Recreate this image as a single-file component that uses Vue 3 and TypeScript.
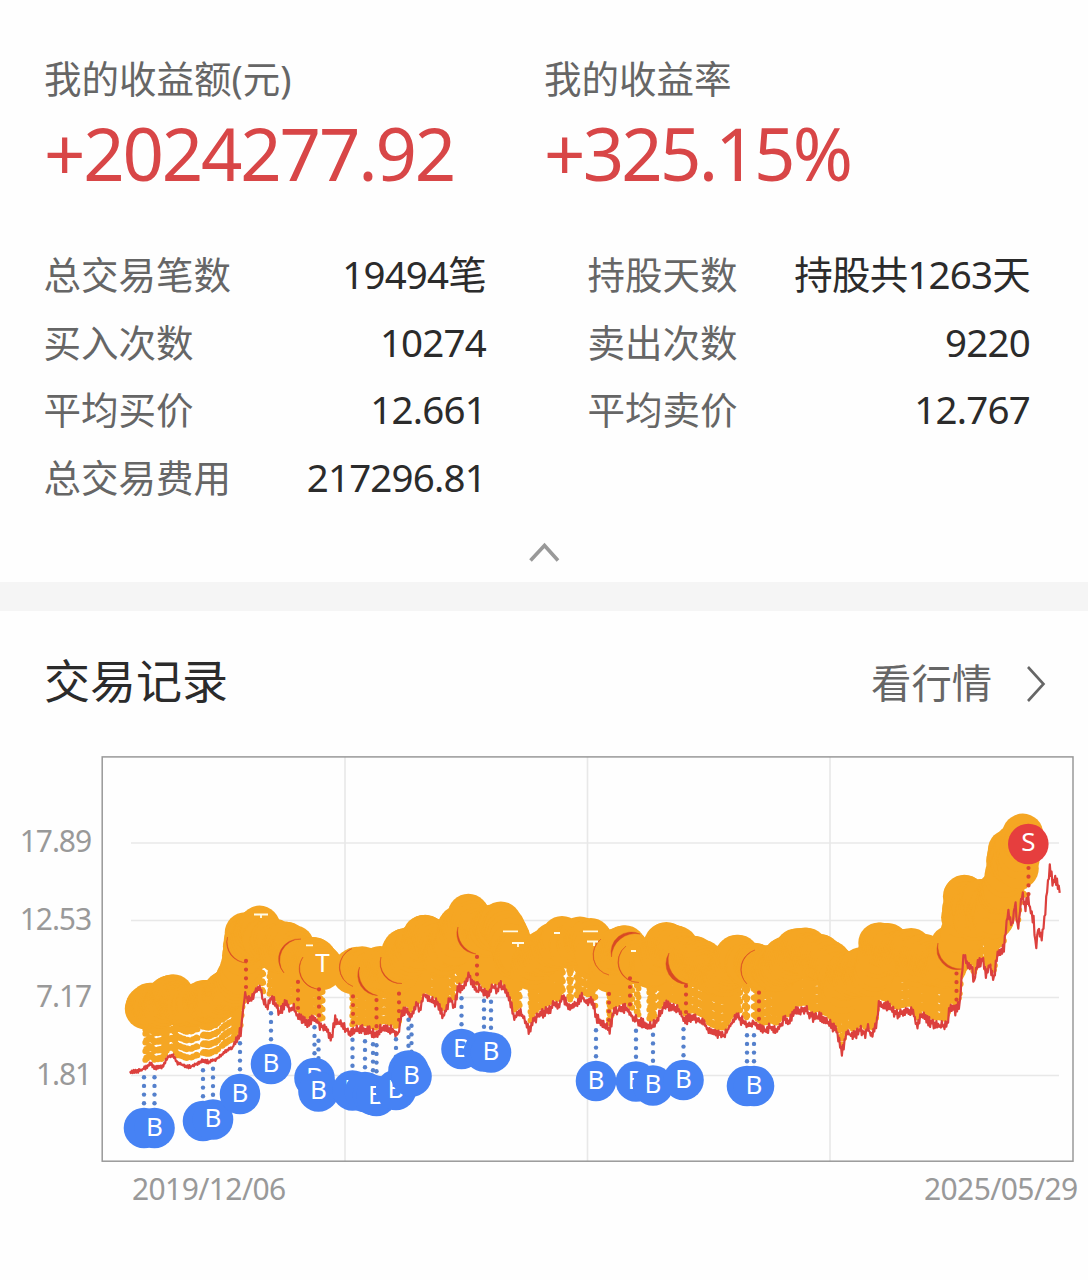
<script setup lang="ts">
interface Stat {
  label: string
  value: string
}

interface Point {
  x: number
  y: number
  base: number
}

const leftStats: Stat[] = [
  { label: '总交易笔数', value: '19494笔' },
  { label: '买入次数', value: '10274' },
  { label: '平均买价', value: '12.661' },
  { label: '总交易费用', value: '217296.81' },
]

const rightStats: Stat[] = [
  { label: '持股天数', value: '持股共1263天' },
  { label: '卖出次数', value: '9220' },
  { label: '平均卖价', value: '12.767' },
]

const yTicks = [
  { text: '17.89', y: 86 },
  { text: '12.53', y: 163.5 },
  { text: '7.17', y: 240.5 },
  { text: '1.81', y: 318.5 },
]
const xGrid = [345, 587.5, 830]

/* Key price points: x, y in chart space */
const keys: number[][] = [
  [130, 1072], [138, 1071], [145, 1068], [151, 1063], [154, 1068], [162, 1067], [168, 1057], [173, 1055],
  [177, 1063], [190, 1067], [202, 1061], [210, 1062], [218, 1058], [225, 1052], [233, 1047], [237, 1038],
  [241, 1031], [243, 1010], [245, 993], [248, 1002], [253, 995], [260, 986], [262, 998], [267, 1008],
  [271, 998], [275, 1003], [280, 1013], [286, 1003], [290, 1011], [293, 1007], [298, 1017], [306, 1023],
  [310, 1022], [315, 1018], [320, 1026], [327, 1030], [331, 1040], [335, 1020], [342, 1025], [350, 1033],
  [358, 1029], [370, 1031], [376, 1036], [380, 1029], [392, 1030], [398, 1034], [402, 1013], [407, 1008],
  [410, 1018], [417, 1005], [420, 1009], [424, 995], [430, 1001], [437, 1003], [443, 1017], [450, 999],
  [454, 1006], [458, 989], [465, 986], [469, 975], [473, 985], [477, 992], [480, 988], [488, 997],
  [492, 985], [497, 990], [500, 982], [505, 991], [510, 1000], [514, 1017], [520, 1012], [525, 1020],
  [529, 1030], [535, 1018], [547, 1011], [555, 1004], [558, 1007], [562, 997], [570, 1007], [577, 1003],
  [582, 996], [585, 1002], [592, 1000], [597, 1018], [603, 1023], [610, 1030], [613, 1013], [622, 1009],
  [627, 1008], [632, 1017], [640, 1022], [652, 1027], [658, 1018], [664, 1005], [677, 1008], [685, 1022],
  [690, 1017], [703, 1023], [712, 1033], [725, 1036], [730, 1025], [737, 1017], [747, 1025], [753, 1023],
  [763, 1031], [772, 1027], [777, 1031], [785, 1018], [788, 1022], [795, 1012], [805, 1009], [812, 1017],
  [820, 1017], [830, 1023], [837, 1032], [842, 1051], [847, 1033], [853, 1036], [860, 1030], [865, 1034],
  [868, 1028], [872, 1037], [876, 1026], [879, 1004], [890, 1007], [895, 1014], [903, 1012], [912, 1010],
  [917, 1025], [922, 1015], [928, 1021], [935, 1025], [947, 1026], [950, 1006], [955, 1011], [960, 1003],
  [962, 973], [964, 952], [968, 967], [972, 968], [974, 982], [978, 963], [983, 960], [986, 976],
  [990, 965], [994, 981], [997, 954], [1004, 947], [1006, 927], [1008, 908], [1012, 927], [1015, 901],
  [1018, 931], [1022, 893], [1025, 907], [1028, 898], [1031, 913], [1034, 922], [1036, 951], [1038, 928],
  [1042, 937], [1045, 913], [1047, 893], [1050, 868], [1053, 885], [1055, 877], [1060, 889],
]

function priceAt(x: number): number {
  for (let i = 1; i < keys.length; i++) {
    if (x <= keys[i][0]) {
      const [ax, ay] = keys[i - 1]
      const [bx, by] = keys[i]
      return ay + ((by - ay) * (x - ax)) / (bx - ax)
    }
  }
  return keys[keys.length - 1][1]
}

/* Repeatable day-to-day movement on top of the key points */
let seed = 20191206
function random(): number {
  seed = (Math.imul(seed, 1664525) + 1013904223) >>> 0
  return seed / 4294967296
}

const days: Point[] = []
for (let i = 0; i <= 1033; i++) {
  const x = 130 + i * 0.9
  const amp = x < 235 ? 1.8 : x > 1003 ? 6 : 5
  const base = priceAt(x)
  days.push({ x, base, y: base + random() * amp * (i % 2 ? 1 : -1) })
}
const pricePath = 'M' + days.map((p) => `${p.x.toFixed(1)},${p.y.toFixed(1)}`).join('L')

/* Spans with no same-day round trips */
const quiet: number[][] = [
  [155.5, 157.5], [188, 191], [193, 195.5], [197.5, 202.5], [219, 221], [264, 269], [272, 274], [323, 352],
  [520, 530.5], [563, 569], [571, 576], [580, 583], [596, 608], [633, 636], [639, 649], [655, 659], [741, 744], [748, 753],
]
const trades = days.filter((p) => p.x >= 145 && p.x <= 1025 && !quiet.some(([a, b]) => p.x > a && p.x < b))

const STEP = 8.7
const tradeDots = trades
  .map((p) => [1, 2, 3, 4, 4.5].map((k) => `M${p.x.toFixed(1)},${(p.base + (p.y - p.base) * 0.5 - k * STEP).toFixed(1)}h0`).join(''))
  .join('')

const sells = [246, 298, 319, 353, 376.5, 399, 477, 609, 630, 686, 759, 956.5].map((x) => ({ x, y: priceAt(x) }))

/* Sell badges peeking out from under the round-trip badges */
function crescent(ax: number, ay: number, bx: number, by: number, inner: number, sweep = 0): string {
  return `M${ax} ${ay}A20.3 20.3 0 0 ${sweep} ${bx} ${by}A${inner} ${inner} 0 0 ${1 - sweep} ${ax} ${ay}Z`
}
const crescents = [
  crescent(227.5, 937, 247, 963, 21.6),
  crescent(301, 939, 284, 973, 21.2),
  crescent(303, 957, 317, 989, 21),
  crescent(352, 948.5, 353, 986.5, 20.6),
  crescent(359.5, 967, 377.5, 995.5, 23.5),
  crescent(381, 957, 402, 983.5, 21.5),
  crescent(458, 927, 476, 954, 24),
  crescent(601, 939, 609, 975, 20.6),
  crescent(611.5, 957, 640, 934, 24, 1),
  crescent(626, 946, 639, 982.5, 20.6),
  crescent(669, 953, 688, 984, 25),
  crescent(755, 950, 747, 984, 20.8),
  crescent(938, 943, 962, 969, 23.2),
]

/* x, y and whether the letter is visible on the badge */
const buys: number[][] = [
  [144, 1128, 0], [154.5, 1128, 1], [203, 1121, 0], [213, 1119.5, 1], [240, 1094, 1], [271, 1064, 1],
  [314.5, 1078, 1], [318.5, 1091.5, 1], [352.5, 1090.5, 1], [365, 1092, 0], [373, 1095, 0], [376.5, 1096, 1],
  [396, 1090, 1], [408.5, 1070.5, 0], [411.5, 1076.5, 1], [461.5, 1049, 1], [484, 1051.5, 0],
  [491, 1052.5, 1], [596, 1081, 1], [636, 1081.5, 1], [653, 1085.5, 1], [683.5, 1080, 1], [747, 1086, 0],
  [754, 1086, 1],
]
const buyDots = [1, 2, 3, 4]
</script>

<template>
  <main class="page">
    <section class="summary">
      <div class="totals">
        <div class="total">
          <div class="total-label">我的收益额(元)</div>
          <div class="total-value">+2024277.92</div>
        </div>
        <div class="total">
          <div class="total-label">我的收益率</div>
          <div class="total-value rate">+325.15%</div>
        </div>
      </div>
      <div class="stats">
        <dl class="stat-col">
          <div v-for="s in leftStats" :key="s.label" class="stat">
            <dt>{{ s.label }}</dt>
            <dd>{{ s.value }}</dd>
          </div>
        </dl>
        <dl class="stat-col">
          <div v-for="s in rightStats" :key="s.label" class="stat">
            <dt>{{ s.label }}</dt>
            <dd>{{ s.value }}</dd>
          </div>
        </dl>
      </div>
      <div class="collapse">
        <svg width="32" height="22" viewBox="0 0 32 22">
          <path d="M2.500 19.500L16.500 4.500L30 19.500" fill="none" stroke="#999" stroke-width="3.600" />
        </svg>
      </div>
    </section>

    <section class="records">
      <header class="records-head">
        <h2>交易记录</h2>
        <a class="more">
          <span>看行情</span>
          <svg width="20" height="38" viewBox="0 0 20 38">
            <path d="M2 2L17.500 19L2 36" fill="none" stroke="#666" stroke-width="2.600" />
          </svg>
        </a>
      </header>

      <svg class="chart" width="1088" height="470" viewBox="0 756 1088 470">
        <g stroke="#e8e8e8" stroke-width="1.600">
          <path v-for="x in xGrid" :key="x" :d="`M${x} 757V1161`" />
          <path v-for="t in yTicks" :key="t.text" :d="`M131 ${t.y + 757}H1059`" />
        </g>
        <rect x="102.200" y="756.900" width="970.800" height="404.300" fill="none" stroke="#999" stroke-width="1.500" />
        <text v-for="t in yTicks" :key="t.text" class="axis" x="91" :y="t.y + 766" text-anchor="end">{{ t.text }}</text>
        <text class="axis date" x="132" y="1200">2019/12/06</text>
        <text class="axis date" x="924" y="1200">2025/05/29</text>

        <path :d="tradeDots" stroke="#f5a623" stroke-width="5.900" stroke-linecap="round" />
        <g fill="#f5a623">
          <circle v-for="p in trades" :key="p.x" :cx="p.x" :cy="p.base + (p.y - p.base) * 0.6 - 60" r="20.500" />
          <circle cx="322" cy="969" r="21" />
        </g>
        <path v-for="s in sells" :key="s.x" :d="`M${s.x} ${s.y - 9}V${s.y - 36}`" class="sell-stem" />
        <path v-for="c in crescents" :key="c" :d="c" fill="#d84a24" stroke="#d84a24" stroke-width="0.400" />
        <path
          class="sliver"
          d="M254 914.500H268M261 914V918M306 945.300H313M503 931.300H518M512 943H524M518 943V947M554 933H560M583 931.300H598M587 941.500H598M594 941V946M631 951H636"
        />
        <text class="mark" x="322.500" y="971.500">T</text>

        <path :d="pricePath" fill="none" stroke="#dc403d" stroke-width="2.200" stroke-linejoin="round" />

        <g v-for="b in buys" :key="b[0]">
          <circle v-for="k in buyDots" :key="k" :cx="b[0]" :cy="b[1] - 59.500 + k * STEP" r="2.200" fill="#5480cc" />
        </g>
        <g v-for="b in buys" :key="'b' + b[0]">
          <circle :cx="b[0]" :cy="b[1]" r="20.300" fill="#4682f4" />
          <text v-if="b[2]" class="mark" :x="b[0]" :y="b[1] + 7.500">B</text>
        </g>

        <path d="M1028.500 868V897" class="sell-stem" />
        <circle cx="1028.300" cy="844" r="20.300" fill="#e63e3e" />
        <text class="mark" x="1028.300" y="850.500">S</text>
      </svg>
    </section>
  </main>
</template>

<style>
body {
  margin: 0;
  background: #fefefe;
}
</style>

<style scoped>
.page {
  width: 1088px;
  height: 1280px;
  overflow: hidden;
  background: #fefefe;
  font-family: 'Noto Sans', 'Noto Sans CJK SC', sans-serif;
  color: #2b2b2b;
}
.summary {
  box-sizing: border-box;
  height: 611px;
  padding-top: 54px;
  border-bottom: 29px solid #f5f5f5;
}
.totals {
  display: grid;
  grid-template-columns: 500px 1fr;
  padding-left: 44px;
}
.total-label {
  height: 50px;
  font-size: 37.5px;
  line-height: 50px;
  color: #666;
}
.total-value {
  height: 100px;
  font-size: 72.5px;
  line-height: 97px;
  letter-spacing: -2.2px;
  color: #d84647;
}
.rate {
  letter-spacing: -2.8px;
}
.stats {
  display: grid;
  grid-template-columns: 442px 442px;
  column-gap: 102px;
  padding: 37px 0 0 44px;
}
.stat-col {
  margin: 0;
}
.stat {
  display: flex;
  justify-content: space-between;
  height: 67.7px;
  line-height: 68px;
}
dt {
  margin-left: -0.5px;
  font-size: 37.5px;
  color: #666;
}
dd {
  margin: 0;
  font-size: 38.5px;
  line-height: 66px;
  letter-spacing: -0.8px;
}
.collapse {
  display: flex;
  justify-content: center;
  padding-top: 29px;
}
.records-head {
  display: flex;
  align-items: center;
  justify-content: space-between;
  height: 145px;
  padding: 0 42px 0 44px;
}
h2 {
  margin: 0;
  padding-bottom: 11px;
  font-size: 46px;
  font-weight: 400;
}
.more {
  display: flex;
  align-items: center;
  gap: 34px;
  font-size: 40.3px;
  color: #666;
}
.more span {
  margin-top: -4px;
  padding-bottom: 2px;
}
.chart {
  display: block;
}
.axis {
  font-size: 30px;
  letter-spacing: -1.1px;
  fill: #999;
}
.date {
  letter-spacing: -0.6px;
}
.mark {
  font-size: 26px;
  fill: #fff;
  text-anchor: middle;
}
.sell-stem {
  fill: none;
  stroke: #dc4630;
  stroke-width: 4.2;
  stroke-linecap: round;
  stroke-dasharray: 0 8.7;
}
.sliver {
  fill: none;
  stroke: #fffbe8;
  stroke-width: 1.8;
}
</style>
